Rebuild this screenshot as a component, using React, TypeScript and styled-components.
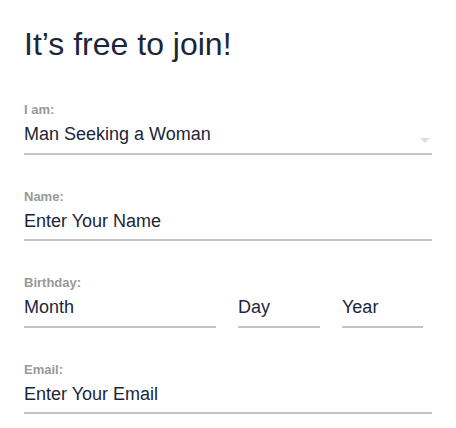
import styled, { createGlobalStyle } from 'styled-components'

const GlobalStyle = createGlobalStyle`
  body {
    margin: 0;
    background: #fff;
    font-family: "Liberation Sans", Arial, sans-serif;
  }
`

const Page = styled.div`
  padding: 26px 24px 0 24px;
  width: 408px;
`

const Title = styled.h1`
  margin: 0 0 40px 0;
  font-size: 32px;
  line-height: 36px;
  font-weight: 400;
  color: #1b2639;
`

const Field = styled.div`
  margin-bottom: 34px;
`

const Label = styled.div`
  font-size: 13px;
  line-height: 15px;
  font-weight: 700;
  color: #999;
  margin-bottom: 5px;
`

const Row = styled.div`
  display: flex;
  gap: 22px;
`

const Input = styled.div<{ $width?: number }>`
  position: relative;
  flex: ${p => (p.$width ? `0 0 ${p.$width}px` : '1')};
  font-size: 18px;
  line-height: 24px;
  color: #1b2639;
  padding-bottom: 6.5px;
  border-bottom: 2px solid #c4c4c4;
`

const Caret = styled.span`
  position: absolute;
  right: 2px;
  top: 16px;
  width: 0;
  height: 0;
  border-left: 5px solid transparent;
  border-right: 5px solid transparent;
  border-top: 5px solid #dcdcdc;
`

export default function App() {
  return (
    <>
      <GlobalStyle />
      <Page>
        <Title>It’s free to join!</Title>
        <Field>
          <Label>I am:</Label>
          <Input>
            Man Seeking a Woman
            <Caret />
          </Input>
        </Field>
        <Field>
          <Label>Name:</Label>
          <Input>Enter Your Name</Input>
        </Field>
        <Field>
          <Label>Birthday:</Label>
          <Row>
            <Input $width={192}>Month</Input>
            <Input $width={82}>Day</Input>
            <Input $width={81}>Year</Input>
          </Row>
        </Field>
        <Field>
          <Label>Email:</Label>
          <Input>Enter Your Email</Input>
        </Field>
      </Page>
    </>
  )
}
